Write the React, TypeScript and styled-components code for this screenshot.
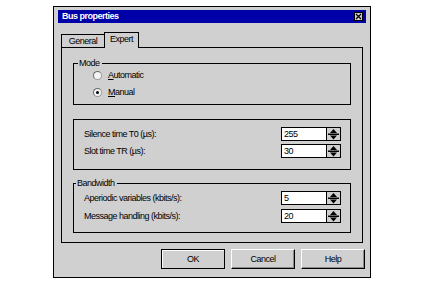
import React from 'react';
import styled, { createGlobalStyle } from 'styled-components';

const Global = createGlobalStyle`
  html, body { margin: 0; padding: 0; background: #ffffff; }
  body {
    font-family: "Liberation Sans", Arial, sans-serif;
    font-size: 9px;
    letter-spacing: -0.5px;
    color: #000;
  }
`;

const GREY = '#d0d0d0';

const Page = styled.div`
  padding: 6px 0 0 53px;
`;

const Dialog = styled.div`
  box-sizing: border-box;
  width: 318px;
  height: 272px;
  border: 1px solid #000;
  background: ${GREY};
  padding: 3px 4px 0 4px;
  display: flex;
  flex-direction: column;
`;

const TitleBar = styled.div`
  height: 13px;
  background: #0000a8;
  display: flex;
  align-items: center;
  justify-content: space-between;
  padding: 0 3px 0 4px;
  color: #fff;
  font-weight: bold;
  line-height: 13px;
`;

const CloseBox = styled.div`
  box-sizing: border-box;
  width: 9px;
  height: 9px;
  border: 1px solid #000;
  background: ${GREY};
  display: flex;
  align-items: center;
  justify-content: center;
`;

const Body = styled.div`
  margin: 9px 3px 0 3px;
  display: flex;
  flex-direction: column;
`;

const TabStrip = styled.div`
  display: flex;
  align-items: flex-end;
  height: 16px;
  margin-bottom: -1px;
  position: relative;
  z-index: 1;
`;

const Tab = styled.div<{ $active?: boolean; $w: number }>`
  box-sizing: border-box;
  width: ${p => p.$w}px;
  height: ${p => (p.$active ? 16 : 13)}px;
  margin-bottom: ${p => (p.$active ? 0 : 1)}px;
  border: 1px solid #000;
  border-bottom: none;
  border-right: ${p => (p.$active ? '1px solid #000' : 'none')};
  background: ${GREY};
  text-align: center;
  line-height: ${p => (p.$active ? 13 : 12)}px;
`;

const Panel = styled.div`
  box-sizing: border-box;
  height: 196px;
  border: 1px solid #000;
  padding: 15px 11px 0 11px;
  display: flex;
  flex-direction: column;
`;

const Group = styled.div<{ $h: number; $mt: number }>`
  box-sizing: border-box;
  position: relative;
  height: ${p => p.$h}px;
  margin-top: ${p => p.$mt}px;
  border: 1px solid #000;
  display: flex;
  flex-direction: column;
`;

const Legend = styled.span<{ $left: number }>`
  position: absolute;
  top: -6px;
  left: ${p => p.$left}px;
  padding: 0 2px 0 1px;
  background: ${GREY};
  line-height: 10px;
`;

const RadioList = styled.div`
  display: flex;
  flex-direction: column;
  gap: 5px;
  padding: 5px 0 0 19px;
`;

const RadioRow = styled.div`
  height: 12px;
  display: flex;
  align-items: center;
  gap: 6px;
`;

const RadioDot = styled.span<{ $checked?: boolean }>`
  box-sizing: border-box;
  width: 9px;
  height: 9px;
  border-radius: 50%;
  border: 1px solid #9a9a9a;
  border-top-color: #6a6a6a;
  border-left-color: #6a6a6a;
  background: #f4f4f4;
  display: flex;
  align-items: center;
  justify-content: center;
  &::after {
    content: '';
    width: 3px;
    height: 3px;
    border-radius: 50%;
    background: ${p => (p.$checked ? '#000' : 'transparent')};
  }
`;

const U = styled.span`
  text-decoration: underline;
`;

const FieldList = styled.div<{ $gap: number }>`
  display: flex;
  flex-direction: column;
  gap: ${p => p.$gap}px;
  padding: 7px 9px 0 10px;
`;

const FieldRow = styled.div`
  height: 14px;
  display: flex;
  align-items: center;
  justify-content: space-between;
`;

const Spin = styled.div`
  display: flex;
  height: 14px;
`;

const SpinInput = styled.div`
  box-sizing: border-box;
  width: 46px;
  height: 14px;
  border: 1px solid #000;
  background: #fff;
  padding-left: 2px;
  line-height: 12px;
`;

const SpinButtons = styled.div`
  box-sizing: border-box;
  width: 14px;
  height: 14px;
  border: 1px solid #000;
  border-left: none;
  background: ${GREY};
  display: flex;
`;

const ButtonRow = styled.div`
  display: flex;
  justify-content: flex-end;
  gap: 6px;
  margin: 6px 1px 0 0;
`;

const Button = styled.div<{ $default?: boolean }>`
  box-sizing: border-box;
  width: 64px;
  height: 20px;
  display: flex;
  align-items: center;
  justify-content: center;
  background: ${GREY};
  border: 1px solid #000;
  border-top-color: ${p => (p.$default ? '#000' : '#fff')};
  border-left-color: ${p => (p.$default ? '#000' : '#fff')};
  box-shadow: ${p => (p.$default ? 'inset 1px 1px 0 #fff' : 'inset -1px -1px 0 #8a8a8a')};
`;

const SpinArrows = () => (
  <svg width="13" height="12" viewBox="0 0 13 12">
    <polygon points="6.5,1 10,5 3,5" fill="#000" />
    <rect x="1" y="5.5" width="11" height="1.5" fill="#000" />
    <polygon points="3,7.5 10,7.5 6.5,11.5" fill="#000" />
  </svg>
);

const SpinBox = ({ value }: { value: string }) => (
  <Spin>
    <SpinInput>{value}</SpinInput>
    <SpinButtons>
      <SpinArrows />
    </SpinButtons>
  </Spin>
);

export default function App() {
  return (
    <>
      <Global />
      <Page>
        <Dialog>
          <TitleBar>
            <span>Bus properties</span>
            <CloseBox>
              <svg width="7" height="7" viewBox="0 0 7 7">
                <path d="M1 1 L6 6 M6 1 L1 6" stroke="#000" strokeWidth="1.2" />
              </svg>
            </CloseBox>
          </TitleBar>
          <Body>
            <TabStrip>
              <Tab $w={43}>General</Tab>
              <Tab $w={35} $active>Expert</Tab>
            </TabStrip>
            <Panel>
              <Group $h={42} $mt={0}>
                <Legend $left={4}>Mode</Legend>
                <RadioList>
                  <RadioRow>
                    <RadioDot />
                    <span><U>A</U>utomatic</span>
                  </RadioRow>
                  <RadioRow>
                    <RadioDot $checked />
                    <span><U>M</U>anual</span>
                  </RadioRow>
                </RadioList>
              </Group>
              <Group $h={51} $mt={14}>
                <FieldList $gap={3}>
                  <FieldRow>
                    <span>Silence time T0 (µs):</span>
                    <SpinBox value="255" />
                  </FieldRow>
                  <FieldRow>
                    <span>Slot time TR (µs):</span>
                    <SpinBox value="30" />
                  </FieldRow>
                </FieldList>
              </Group>
              <Group $h={50} $mt={13}>
                <Legend $left={2}>Bandwidth</Legend>
                <FieldList $gap={4}>
                  <FieldRow>
                    <span>Aperiodic variables (kbits/s):</span>
                    <SpinBox value="5" />
                  </FieldRow>
                  <FieldRow>
                    <span>Message handling (kbits/s):</span>
                    <SpinBox value="20" />
                  </FieldRow>
                </FieldList>
              </Group>
            </Panel>
          </Body>
          <ButtonRow>
            <Button $default>OK</Button>
            <Button>Cancel</Button>
            <Button>Help</Button>
          </ButtonRow>
        </Dialog>
      </Page>
    </>
  );
}
